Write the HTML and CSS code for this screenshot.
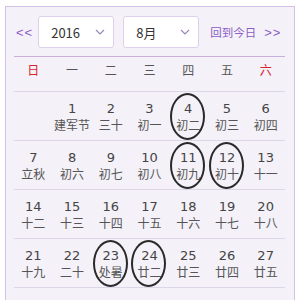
FILE: index.html
```html
<!DOCTYPE html>
<html lang="zh-CN">
<head>
    <meta charset="UTF-8">
    <title>万年历</title>
    <link rel="stylesheet" href="styles.css">
</head>
<body>
    <div class="panel">
        <!-- 顶部：年月选择 -->
        <div class="header">
            <a class="nav prev">&lt;&lt;</a>
            <div class="select year">
                <span>2016</span>
                <svg width="10" height="6" viewBox="0 0 10 6"><path d="M1 1l4 4 4-4" fill="none" stroke="#9b86b8" stroke-width="1.2"/></svg>
            </div>
            <div class="select month">
                <span>8月</span>
                <svg width="10" height="6" viewBox="0 0 10 6"><path d="M1 1l4 4 4-4" fill="none" stroke="#9b86b8" stroke-width="1.2"/></svg>
            </div>
            <a class="today">回到今日</a>
            <a class="nav next">&gt;&gt;</a>
        </div>

        <!-- 星期 -->
        <div class="week">
            <span class="red">日</span><span>一</span><span>二</span><span>三</span><span>四</span><span>五</span><span class="red">六</span>
        </div>

        <!-- 日期 -->
        <div class="days">
            <div class="row">
                <div class="day"></div>
                <div class="day"><b>1</b><i>建军节</i></div>
                <div class="day"><b>2</b><i>三十</i></div>
                <div class="day"><b>3</b><i>初一</i></div>
                <div class="day mark"><b>4</b><i>初二</i></div>
                <div class="day"><b>5</b><i>初三</i></div>
                <div class="day"><b>6</b><i>初四</i></div>
            </div>
            <div class="row">
                <div class="day"><b>7</b><i>立秋</i></div>
                <div class="day"><b>8</b><i>初六</i></div>
                <div class="day"><b>9</b><i>初七</i></div>
                <div class="day"><b>10</b><i>初八</i></div>
                <div class="day mark"><b>11</b><i>初九</i></div>
                <div class="day mark"><b>12</b><i>初十</i></div>
                <div class="day"><b>13</b><i>十一</i></div>
            </div>
            <div class="row">
                <div class="day"><b>14</b><i>十二</i></div>
                <div class="day"><b>15</b><i>十三</i></div>
                <div class="day"><b>16</b><i>十四</i></div>
                <div class="day"><b>17</b><i>十五</i></div>
                <div class="day"><b>18</b><i>十六</i></div>
                <div class="day"><b>19</b><i>十七</i></div>
                <div class="day"><b>20</b><i>十八</i></div>
            </div>
            <div class="row">
                <div class="day"><b>21</b><i>十九</i></div>
                <div class="day"><b>22</b><i>二十</i></div>
                <div class="day mark"><b>23</b><i>处暑</i></div>
                <div class="day mark"><b>24</b><i>廿二</i></div>
                <div class="day"><b>25</b><i>廿三</i></div>
                <div class="day"><b>26</b><i>廿四</i></div>
                <div class="day"><b>27</b><i>廿五</i></div>
            </div>
            <div class="row">
                <div class="day"><b>28</b><i>廿六</i></div>
                <div class="day"><b>29</b><i>廿七</i></div>
                <div class="day"><b>30</b><i>廿八</i></div>
                <div class="day"><b>31</b><i>廿九</i></div>
                <div class="day"></div>
                <div class="day"></div>
                <div class="day"></div>
            </div>
        </div>
    </div>
</body>
</html>
```

FILE: styles.css
```css
/* 基本 */
body {
    margin: 6px 0 0 5px;
    background: #fff;
    font-family: "Noto Sans CJK SC", "Liberation Sans", sans-serif;
    color: #444;
}

.panel {
    width: 271px;
    height: 300px;
    padding: 0 9px 0 8px;
    background: #f4f1f8;
    border: 1px solid #d4bfe6;
    border-bottom: none;
}

/* 顶部 */
.header {
    display: flex;
    align-items: center;
    height: 32px;
    padding: 9px 0 8px;
    border-bottom: 1px solid #c9afe0;
    white-space: nowrap;
}

.nav, .today {
    flex-shrink: 0;
    color: #8b5cc6;
    cursor: pointer;
}

.nav {
    font-family: "Liberation Sans", sans-serif;
    font-size: 13px;
    letter-spacing: 1px;
}

.today {
    font-size: 11.5px;
    margin-left: 11px;
    margin-right: 8px;
}

.prev {
    margin-left: 2px;
    margin-right: 5px;
}

.select {
    flex-shrink: 0;
    display: flex;
    align-items: center;
    justify-content: space-between;
    box-sizing: border-box;
    width: 76px;
    height: 32px;
    padding: 0 8px 0 12px;
    background: #fff;
    border: 1px solid #ddd0ea;
    border-radius: 3px;
    font-size: 13px;
    color: #333;
}

.month {
    margin-left: 9px;
}

/* 星期 */
.week {
    display: grid;
    grid-template-columns: repeat(7, 1fr);
    height: 34px;
    border-bottom: 1px solid #ddd6e6;
    font-size: 12px;
    line-height: 26px;
    text-align: center;
    color: #555;
}

.week .red {
    color: #d8232a;
}

/* 日期 */
.row {
    display: grid;
    grid-template-columns: repeat(7, 1fr);
    height: 48px;
    border-bottom: 1px solid #ddd6e6;
}

.day {
    position: relative;
    display: flex;
    flex-direction: column;
    align-items: center;
    padding-top: 9px;
    white-space: nowrap;
}

.day b {
    font-family: "DejaVu Sans", sans-serif;
    font-weight: normal;
    font-size: 13px;
    line-height: 15px;
    color: #444;
}

.day i {
    font-style: normal;
    font-size: 12px;
    line-height: 17px;
    color: #555;
}

.mark::after {
    content: "";
    position: absolute;
    left: 50%;
    top: 1px;
    width: 31px;
    height: 43px;
    margin-left: -18px;
    border: 2.5px solid #2a2a2a;
    border-radius: 50%;
}
```
